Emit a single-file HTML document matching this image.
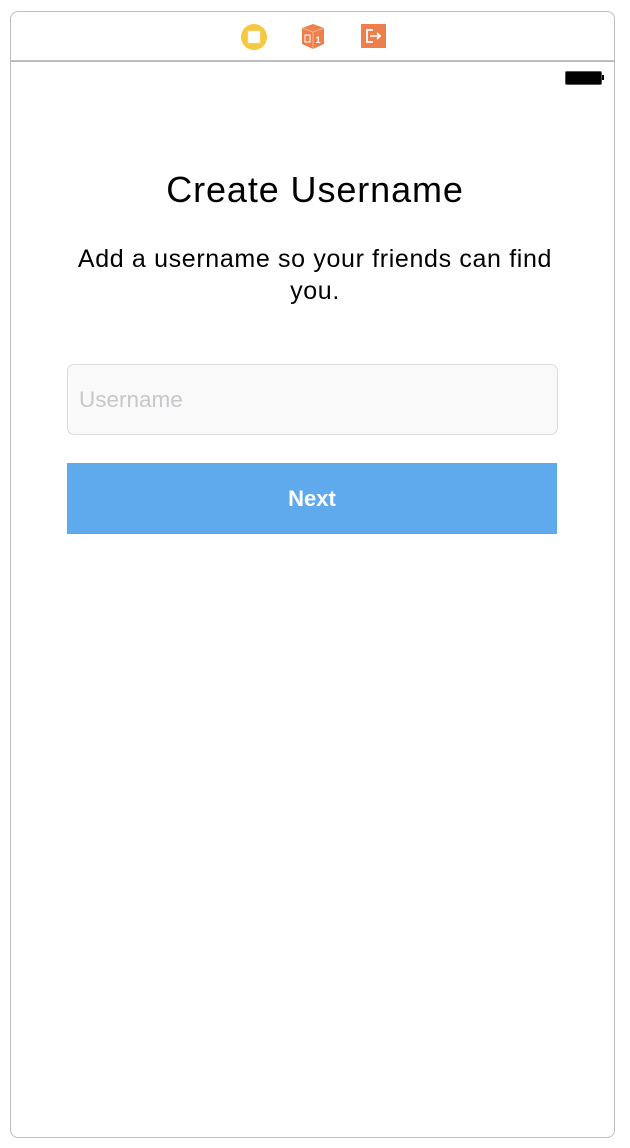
<!DOCTYPE html>
<html><head><meta charset="utf-8"><style>
html,body{margin:0;padding:0;background:#fff;width:630px;height:1148px;overflow:hidden;font-family:"Liberation Sans",Arial,sans-serif;}
.frame{position:absolute;left:10px;top:11px;width:603px;height:1125px;border:1.5px solid #bdbdbd;border-radius:8px;background:#fff;}
.sep{position:absolute;left:10px;top:60px;width:605px;height:1.5px;background:#bdbdbd;}
.t{position:absolute;left:0;width:630px;text-align:center;color:#000;white-space:nowrap;}
.input{position:absolute;left:67px;top:364px;width:491px;height:71px;border:1px solid #dcdcdc;border-radius:7px;background:#f9f9f9;box-sizing:border-box;}
.btn{position:absolute;left:67px;top:463px;width:490px;height:71px;background:#5fa9ed;color:#fff;font-weight:bold;font-size:22px;text-align:center;line-height:72px;}
</style></head><body>
<div class="frame"></div>
<div class="sep"></div>
<svg style="position:absolute;left:240px;top:23px" width="150" height="28">
<ellipse cx="14" cy="14" rx="13" ry="13" fill="#f5c842"/>
<rect x="8" y="8" width="12" height="12" fill="#fff" stroke="#f0e6b0" stroke-dasharray="1.5 1"/>
<path d="M62 5 L73 1 L84 5 L84 21 L73 26 L62 21 Z" fill="#ec7f4c"/>
<path d="M62 5 L73 9 L84 5 M73 9 L73 26" stroke="#f7b592" stroke-width="1" fill="none"/>
<rect x="65" y="12" width="5" height="7" fill="none" stroke="#fff" stroke-width="1"/>
<text x="75.5" y="20" font-size="9" font-weight="bold" fill="#fff" font-family="Liberation Sans">1</text>
<rect x="121" y="1" width="25" height="24" fill="#ec7f4c"/>
<path d="M133 7 H127 V19 H133" stroke="#fff" stroke-width="1.8" fill="none"/>
<path d="M130 13 H140 M137 10 L140 13 L137 16" stroke="#fff" stroke-width="1.6" fill="none"/>
</svg>
<div style="position:absolute;left:565px;top:71px;width:35px;height:12px;border:1px solid #555;border-radius:2px;background:#000"></div>
<div style="position:absolute;left:602px;top:75px;width:2px;height:5px;background:#000"></div>
<div class="t" style="top:168px;font-size:36px;line-height:44px;letter-spacing:0.9px">Create Username</div>
<div class="t" style="top:243px;font-size:25px;line-height:32px;letter-spacing:0.65px">Add a username so your friends can find</div>
<div class="t" style="top:275px;font-size:25px;line-height:32px;letter-spacing:0.65px">you.</div>
<div class="input"><span style="position:absolute;left:11px;top:22px;font-size:22.5px;color:#c7c7cc">Username</span></div>
<div class="btn">Next</div>
</body></html>
